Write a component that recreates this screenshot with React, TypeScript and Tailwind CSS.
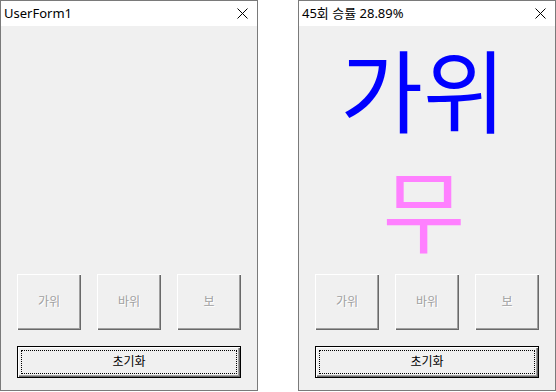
const FONT = "font-['Segoe_UI','Noto_Sans','Noto_Sans_CJK_KR',sans-serif]"

function CloseGlyph() {
  return (
    <svg width="11" height="11" viewBox="0 0 11 11" className="shrink-0">
      <path d="M0.5 0.5 L10.5 10.5 M10.5 0.5 L0.5 10.5" stroke="#000" strokeWidth="1" />
    </svg>
  )
}

function HandButton({ label }: { label: string }) {
  return (
    <button
      disabled
      className="flex h-[56px] w-[64px] items-center justify-center bg-[#f0f0f0] text-[12px] text-[#a0a0a0] shadow-[inset_1px_1px_0_#fff,inset_-1px_-1px_0_#696969,inset_-2px_-2px_0_#a0a0a0] [text-shadow:1px_1px_0_#fff]"
    >
      {label}
    </button>
  )
}

function ResetButton() {
  return (
    <button className="flex h-[32px] w-full border border-black bg-[#f0f0f0] p-[3px] shadow-[inset_1px_1px_0_#fff,inset_-1px_-1px_0_#696969,inset_-2px_-2px_0_#a0a0a0]">
      <span className="flex flex-1 items-center justify-center border border-dotted border-black text-[12px] text-black">
        초기화
      </span>
    </button>
  )
}

function UserForm({ title, children }: { title: string; children?: React.ReactNode }) {
  return (
    <div className="flex h-[391px] w-[258px] flex-col border border-[#7a7a7a] bg-[#f0f0f0]">
      <div className="flex h-[25px] items-center justify-between bg-white pl-[3px] pr-[9px] text-[13px] text-black">
        <span>{title}</span>
        <CloseGlyph />
      </div>
      <div className="flex flex-1 flex-col px-[16px] pb-[12px]">
        <div className="flex flex-1 flex-col items-center">{children}</div>
        <div className="flex justify-between">
          <HandButton label="가위" />
          <HandButton label="바위" />
          <HandButton label="보" />
        </div>
        <div className="mt-[16px]">
          <ResetButton />
        </div>
      </div>
    </div>
  )
}

export default function App() {
  return (
    <div className={`flex h-[392px] w-[556px] gap-[40px] bg-white ${FONT}`}>
      <UserForm title="UserForm1" />
      <UserForm title="45회 승률 28.89%">
        <div className="mt-[20px] pr-[8px] text-[90px] leading-none text-[#0000ff]">가위</div>
        <div className="mt-[30px] pr-[6px] text-[90px] leading-none text-[#ff80ff]">무</div>
      </UserForm>
    </div>
  )
}
